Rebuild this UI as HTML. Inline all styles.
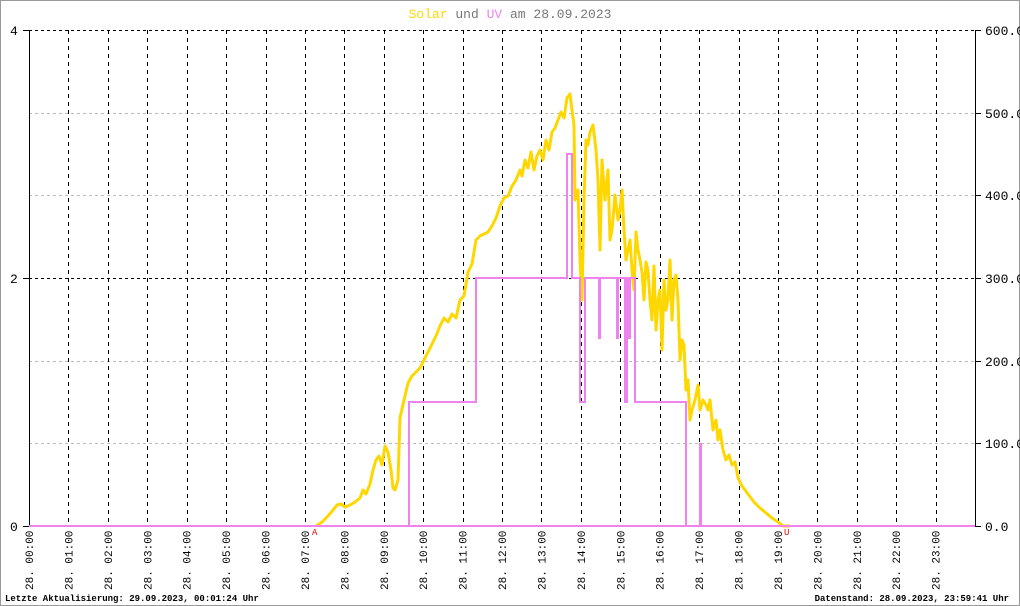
<!DOCTYPE html>
<html><head><meta charset="utf-8"><style>
html,body{margin:0;padding:0;background:#fff}
svg{display:block}
text{font-family:"Liberation Mono",monospace;font-size:11px}
</style></head><body>
<svg width="1020" height="606" viewBox="0 0 1020 606" xmlns="http://www.w3.org/2000/svg">
<rect x="0.5" y="0.5" width="1019" height="605" fill="#fff" stroke="#999"/>
<text x="510" y="18" text-anchor="middle" style="font-size:13px"><tspan fill="#ffd700">Solar</tspan><tspan fill="#777"> und </tspan><tspan fill="#ee82ee">UV</tspan><tspan fill="#777"> am 28.09.2023</tspan></text>
<g stroke="#bbb" stroke-dasharray="3,3" stroke-width="1">
<line x1="29" y1="113.5" x2="975" y2="113.5"/><line x1="29" y1="195.5" x2="975" y2="195.5"/>
<line x1="29" y1="361.5" x2="975" y2="361.5"/><line x1="29" y1="443.5" x2="975" y2="443.5"/>
</g>
<g stroke="#000" stroke-dasharray="3,3" stroke-width="1">
<line x1="29" y1="30.5" x2="975" y2="30.5"/><line x1="29" y1="278.5" x2="975" y2="278.5"/>
</g>
<g stroke="#000" stroke-dasharray="4,4" stroke-width="1" id="vg"></g>
<line x1="29.5" y1="30" x2="29.5" y2="526" stroke="#000"/>
<line x1="975.5" y1="30" x2="975.5" y2="526" stroke="#000"/>
<g stroke="#000"><line x1="23" y1="30.5" x2="29" y2="30.5"/><line x1="23" y1="278.5" x2="29" y2="278.5"/><line x1="23" y1="526.5" x2="29" y2="526.5"/>
<line x1="975" y1="30.5" x2="981" y2="30.5"/><line x1="975" y1="113.5" x2="981" y2="113.5"/><line x1="975" y1="195.5" x2="981" y2="195.5"/><line x1="975" y1="278.5" x2="981" y2="278.5"/><line x1="975" y1="361.5" x2="981" y2="361.5"/><line x1="975" y1="443.5" x2="981" y2="443.5"/><line x1="975" y1="526.5" x2="981" y2="526.5"/></g>
<g fill="#000">
<text x="10" y="35" style="font-size:13px">4</text><text x="10" y="283" style="font-size:13px">2</text><text x="10" y="531" style="font-size:13px">0</text>
<text x="985" y="35" style="font-size:13px">600.0</text><text x="985" y="118" style="font-size:13px">500.0</text><text x="985" y="200" style="font-size:13px">400.0</text><text x="985" y="283" style="font-size:13px">300.0</text><text x="985" y="366" style="font-size:13px">200.0</text><text x="985" y="448" style="font-size:13px">100.0</text><text x="985" y="531" style="font-size:13px">0.0</text>
</g>
<line x1="29" y1="526" x2="975" y2="526" stroke="#ffd700" stroke-width="2"/>
<polyline fill="none" stroke="#ffd700" stroke-width="3" stroke-linejoin="round" points="316,526 322,522 328,516 333,510 337,505 341,504 345,507 350,505 355,502 360,498 363,490 366,494 370,484 373,470 376,460 379,456 382,465 385,446 388,452 391,470 393,488 395,490 398,480 400,418 404,400 408,383 412,376 416,372 420,368 424,360 428,352 432,344 436,336 440,326 444,318 448,322 452,314 456,318 460,300 464,296 468,272 472,264 476,240 480,236 484,234 488,232 492,226 496,218 500,206 504,198 508,196 512,186 516,180 520,170 522,176 525,160 528,168 531,152 534,170 537,156 540,150 543,160 546,140 549,150 552,132 555,128 558,120 561,112 564,118 567,98 570,94 572,110 574,125 575,200 578,190 580,260 582,300 584,200 586,140 588,145 590,132 593,125 596,150 598,180 600,250 602,160 605,200 608,170 610,240 612,230 615,195 618,220 620,210 622,190 624,230 626,260 628,250 630,240 632,270 634,290 636,232 638,250 640,260 642,272 644,300 646,262 648,270 650,300 652,320 654,266 656,330 658,300 660,290 662,350 664,280 666,310 668,300 670,260 672,320 674,280 676,275 678,300 680,360 682,340 684,345 686,390 688,380 690,420 692,410 695,400 698,385 700,410 703,400 706,405 708,410 710,400 713,430 716,420 718,440 720,430 723,450 726,460 729,455 732,465 735,462 738,478 742,486 748,494 754,502 760,508 766,513 772,518 778,522 783,526 790,526"/>
<polyline fill="none" stroke="#ee82ee" stroke-width="2" points="29,526 409,526 409,402 476,402 476,278 567,278 567,154 572,154 572,278 580,278 580,402 585,402 585,278 599,278 599,338 600,338 600,278 617,278 617,338 618,338 618,278 625,278 625,402 627,402 627,278 629,278 629,338 630,338 630,278 635,278 635,402 686,402 686,526 700,526 700,444 701,444 701,526 975,526"/>
<line x1="409" y1="526" x2="686" y2="526" stroke="#ee82ee" stroke-width="2"/>
<text x="312" y="535" fill="#e00" style="font-size:9px">A</text>
<text x="784" y="535" fill="#e00" style="font-size:9px">U</text>
<g id="xl" fill="#000"></g>
<text x="5" y="601" style="font-size:9px;font-weight:bold" fill="#000">Letzte Aktualisierung: 29.09.2023, 00:01:24 Uhr</text>
<text x="1009" y="601" text-anchor="end" style="font-size:9px;font-weight:bold" fill="#000">Datenstand: 28.09.2023, 23:59:41 Uhr</text>
<script>
var vg=document.getElementById('vg'),xl=document.getElementById('xl'),ns='http://www.w3.org/2000/svg';
for(var i=1;i<24;i++){var x=Math.round(29+i*39.42)+0.5;var l=document.createElementNS(ns,'line');l.setAttribute('x1',x);l.setAttribute('x2',x);l.setAttribute('y1',30);l.setAttribute('y2',526);vg.appendChild(l);}
for(var i=0;i<24;i++){var x=29+i*39.42+4;var t=document.createElementNS(ns,'text');t.setAttribute('transform','translate('+x+',590) rotate(-90)');t.textContent='28. '+(i<10?'0':'')+i+':00';xl.appendChild(t);}
</script>
</svg>
</body></html>
